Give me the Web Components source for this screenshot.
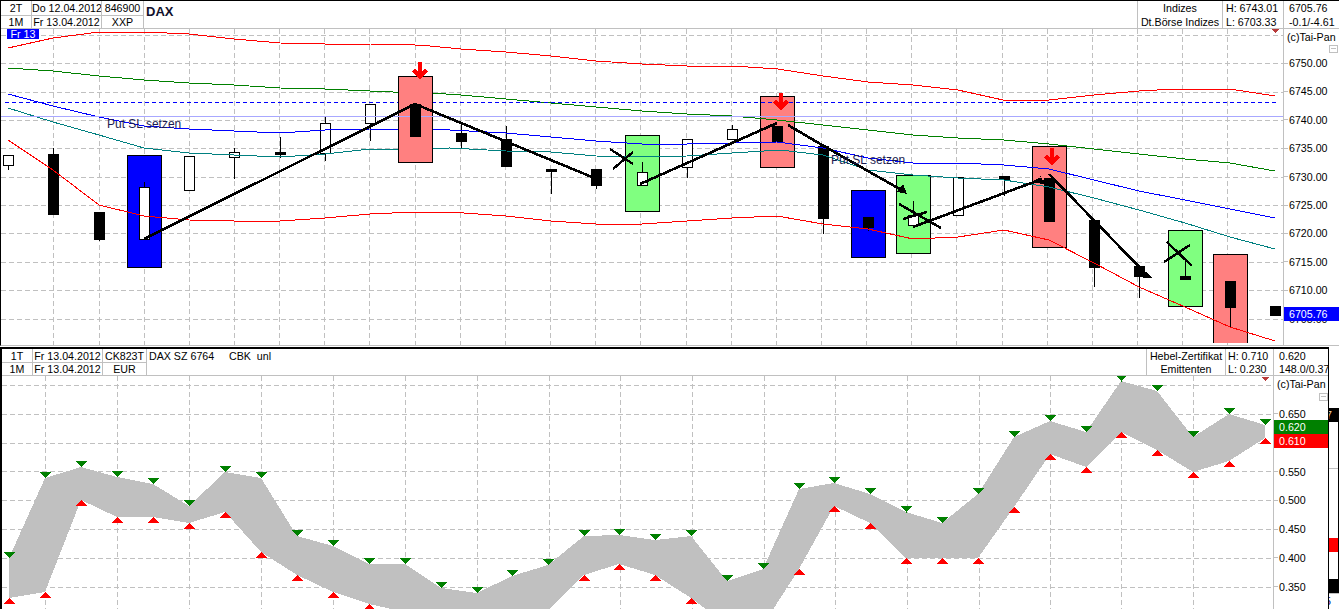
<!DOCTYPE html>
<html lang="de"><head><meta charset="utf-8"><title>Tai-Pan DAX</title>
<style>
html,body{margin:0;padding:0;background:#fff;overflow:hidden}
body{font:10.67px/12px "Liberation Sans",Arial,sans-serif;color:#000}
</style></head><body>
<tp-app>
  <tp-panel slot="top" variant="top">
    <tp-header slot="header" r1="14" r2="12">
      <tp-cell w="31" split><div>2T</div><div>1M</div></tp-cell>
      <tp-cell w="70" split><div>Do 12.04.2012</div><div>Fr 13.04.2012</div></tp-cell>
      <tp-cell w="42" split><div>846900</div><div>XXP</div></tp-cell>
      <tp-cell grow><tp-title>DAX</tp-title></tp-cell>
      <tp-cell w="85"><div>Indizes</div><div>Dt.Börse Indizes</div></tp-cell>
      <tp-cell w="61" left="3"><div>H: 6743.01</div><div>L: 6703.33</div></tp-cell>
      <tp-cell w="55" left="5" last><div>6705.76</div><div>-0.1/-4.61</div></tp-cell>
    </tp-header>
    <tp-price-chart slot="plot">
      <tp-tag style="left:6px;top:0;width:32px;height:10px;background:#0000ff;color:#fff;font-size:10.67px;line-height:11px;text-align:center">Fr 13</tp-tag>
      <tp-tag style="left:106px;top:88px;font-size:12px;line-height:14px;color:#1c1c50">Put SL setzen</tp-tag>
      <tp-tag style="left:830px;top:124px;font-size:12px;line-height:14px;color:#1c1c50">Put SL setzen</tp-tag>
    </tp-price-chart>
    <tp-axis slot="axis" first="19.8" row="28.42" copy-left="3">
      <span slot="copy">(c)Tai-Pan</span>
      <tp-tick>6750.00</tp-tick><tp-tick>6745.00</tp-tick><tp-tick>6740.00</tp-tick><tp-tick>6735.00</tp-tick><tp-tick>6730.00</tp-tick><tp-tick>6725.00</tp-tick><tp-tick>6720.00</tp-tick><tp-tick>6715.00</tp-tick><tp-tick>6710.00</tp-tick><tp-tick>6705.00</tp-tick>
      <tp-minus slot="over" style="left:45px;top:16px"></tp-minus>
      <tp-tag slot="over" style="left:0;top:278px;width:55px;height:14px;background:#0000ff;color:#fff;line-height:14px;padding-left:5px;box-sizing:border-box">6705.76</tp-tag>
    </tp-axis>
  </tp-panel>
  <tp-panel slot="bottom" variant="bottom">
    <tp-header slot="header" r1="13" r2="12">
      <tp-cell w="31" split><div>1T</div><div>1M</div></tp-cell>
      <tp-cell w="70" split><div>Fr 13.04.2012</div><div>Fr 13.04.2012</div></tp-cell>
      <tp-cell w="44" split><div>CK823T</div><div>EUR</div></tp-cell>
      <tp-cell grow left="2"><div style="white-space:pre">DAX SZ 6764     CBK  unl</div></tp-cell>
      <tp-cell w="79"><div>Hebel-Zertifikat</div><div>Emittenten</div></tp-cell>
      <tp-cell w="48" left="2"><div>H: 0.710</div><div>L: 0.230</div></tp-cell>
      <tp-cell w="54" left="5" last><div>0.620</div><div>148.0/0.37</div></tp-cell>
    </tp-header>
    <tp-warrant-chart slot="plot"></tp-warrant-chart>
    <tp-axis slot="axis" first="23.6" row="28.8" copy-left="3">
      <span slot="copy">(c)Tai-Pan</span>
      <tp-tick>0.650</tp-tick><tp-tick blank></tp-tick><tp-tick>0.550</tp-tick><tp-tick>0.500</tp-tick><tp-tick>0.450</tp-tick><tp-tick>0.400</tp-tick><tp-tick>0.350</tp-tick>
      <tp-minus slot="over" style="left:45px;top:17px"></tp-minus>
      <tp-tag slot="over" style="left:0;top:44px;width:54px;height:14px;background:#008000;color:#fff;line-height:14px;padding-left:5px;box-sizing:border-box">0.620</tp-tag>
      <tp-tag slot="over" style="left:0;top:58px;width:54px;height:14px;background:#ff0000;color:#fff;line-height:14px;padding-left:5px;box-sizing:border-box">0.610</tp-tag>
    </tp-axis>
  </tp-panel>
  <tp-strip slot="strip"></tp-strip>
</tp-app>
<script>
const def=(name,cls)=>customElements.define(name,cls);
class Base extends HTMLElement{
  constructor(){super();this.attachShadow({mode:'open'});}
}
def('tp-app',class extends Base{connectedCallback(){this.shadowRoot.innerHTML=`<style>
:host{display:grid;width:1339px;height:609px;grid-template-columns:1329px 10px;grid-template-rows:346px 1px 262px;overflow:hidden;background:#fff}
.top{grid-column:1/3;grid-row:1}.gap{grid-column:1/3;grid-row:2}.bot{grid-column:1;grid-row:3;min-width:0}.str{grid-column:2;grid-row:3;min-width:0}
</style><div class="top"><slot name="top"></slot></div><div class="gap"></div><div class="bot"><slot name="bottom"></slot></div><div class="str"><slot name="strip"></slot></div>`;}});
def('tp-panel',class extends Base{connectedCallback(){const top=this.getAttribute('variant')==='top';this.shadowRoot.innerHTML=`<style>
:host{display:flex;flex-direction:column;height:100%;box-sizing:border-box;background:#fff;overflow:hidden;
${top?'border-top:1px solid #000;border-left:1px solid #000;border-bottom:1px solid #c0c0c0;':'border-top:2px solid #000;border-left:2px solid #000;border-right:1px solid #000;'}}
.body{flex:1;display:flex;min-height:0}
</style><slot name="header"></slot><div class="body"><slot name="plot"></slot><slot name="axis"></slot></div>`;}});
def('tp-header',class extends Base{connectedCallback(){const a=+this.getAttribute('r1'),b=+this.getAttribute('r2');this.shadowRoot.innerHTML=`<style>
:host{display:flex;flex:none;height:${a+b+2}px;box-sizing:border-box;border-bottom:1px solid #c0c0c0;--r1:${a}px;--r2:${b}px}
</style><slot></slot>`;}});
def('tp-cell',class extends Base{connectedCallback(){
  const w=this.getAttribute('w'),g=this.hasAttribute('grow'),s=this.hasAttribute('split'),l=this.getAttribute('left'),last=this.hasAttribute('last');
  this.shadowRoot.innerHTML=`<style>
:host{display:grid;grid-template-rows:calc(var(--r1) + 1px) var(--r2);box-sizing:border-box;overflow:hidden;white-space:nowrap;
${g?'flex:1;min-width:0;':`flex:none;width:${w}px;`}${last?'':'border-right:1px solid #c0c0c0;'}}
::slotted(div){text-align:${l?'left':'center'};padding-left:${l||0}px;line-height:12px;align-self:stretch;display:block;overflow:hidden}
::slotted(div:first-child){padding-top:1px;${s?'border-bottom:1px solid #c0c0c0;':''}}
</style><slot></slot>`;}});
def('tp-title',class extends Base{connectedCallback(){this.shadowRoot.innerHTML=`<style>
:host{display:block;font:bold 13px/22px "Liberation Sans",Arial,sans-serif;color:#10102c;padding-left:2px}
</style><slot></slot>`;}});
def('tp-tag',class extends Base{connectedCallback(){this.shadowRoot.innerHTML=`<style>
:host{position:absolute;display:block;white-space:nowrap}
</style><slot></slot>`;}});
def('tp-tick',class extends Base{connectedCallback(){const blank=this.hasAttribute('blank');this.shadowRoot.innerHTML=`<style>
:host{display:flex;align-items:center;gap:1px;flex:none;height:var(--row);white-space:nowrap}
i{width:4px;border-top:1px solid #c0c0c0;flex:none}
</style><i></i><slot></slot>`;if(blank)this.shadowRoot.querySelector('i').style.visibility='hidden';}});
def('tp-minus',class extends Base{connectedCallback(){this.shadowRoot.innerHTML=`<style>
:host{position:absolute;display:block;width:9px;height:8px;box-sizing:border-box;border:1px solid #c0c0c0;background:#fff}
i{display:block;margin:2px 1px 0;border-top:1px solid #c0c0c0}
</style><i></i>`;}});
def('tp-axis',class extends Base{connectedCallback(){const f=this.getAttribute('first'),r=this.getAttribute('row'),c=this.getAttribute('copy-left');this.shadowRoot.innerHTML=`<style>
:host{position:relative;display:flex;flex-direction:column;flex:1;min-width:0;box-sizing:border-box;border-left:1px solid #c0c0c0;--row:${r}px;overflow:hidden;background:#fff}
.copy{height:${f}px;flex:none;font-size:10.67px;line-height:17px;padding-left:${c}px;white-space:nowrap;box-sizing:border-box}
</style><div class="copy"><slot name="copy"></slot></div><slot></slot><slot name="over"></slot>`;}});
/* chart helpers */
const pl=(pts,col,w=1,extra='')=>`<polyline points="${pts.map(p=>p.join(',')).join(' ')}" fill="none" stroke="${col}" stroke-width="${w}" ${extra}/>`;
const ln=(a,b,c,d,col,w=1,extra='')=>`<line x1="${a}" y1="${b}" x2="${c}" y2="${d}" stroke="${col}" stroke-width="${w}" ${extra}/>`;
const grid=(xs,ys,x0,x1,y0,y1)=>xs.map(x=>ln(x+.5,y0,x+.5,y1,'#c0c0c0',1,'stroke-dasharray="5 3"')).join('')+ys.map(y=>ln(x0,y+.5,x1,y+.5,'#c0c0c0',1,'stroke-dasharray="5 3"')).join('');
def('tp-price-chart',class extends Base{connectedCallback(){
  const xs=[];for(let i=0;i<27;i++)xs.push(Math.round(53.4+45.15*i));
  const ys=[35,63,92,120,148,177,205,233,262,290,319];
  const box=(x,y,w,h,c)=>`<rect x="${x+.5}" y="${y+.5}" width="${w}" height="${h}" fill="${c}" stroke="#000"/>`;
  const pink='#ff8080',lime='#80ff80',blue='#0000ff';
  const boxes=[[127,155,34,112,blue],[625,135,34,76,lime],[760,96,34,71,pink],[851,190,34,67,blue],[896,175,34,78,lime],[1032,146,34,101,pink],[1168,230,34,76,lime]];
  const openBox=`<rect x="1213.5" y="254.5" width="34" height="88" fill="${pink}"/>`+pl([[1213.5,343],[1213.5,254.5],[1247.5,254.5],[1247.5,343]],'#000');
  const firstBox=[398,76,34,86,pink];
  /* candle: x,top,bottom,wickTop,wickBottom,white */
  const C=[[8,155,165,155,169,1],[53,154,214,148,214,0],[99,212,239,212,240,0],[144,187,239,182,239,1],[189,156,190,156,190,1],[234,152,157,148,178,1],[280,152,154,137,157,0],[325,123,153,117,160,1],[370,104,123,104,140,1],[461,133,141,124,148,0],[506,139,166,126,166,0],[551,169,171,169,193,0],[596,169,185,169,188,0],[642,172,185,162,185,1],[687,139,167,139,177,1],[732,129,139,125,139,1],[777,126,141,126,141,0],[823,146,218,146,233,0],[868,217,227,217,230,0],[913,215,225,201,225,1],[958,177,215,177,215,1],[1004,176,179,176,195,0],[1049,178,221,178,221,0],[1094,220,267,220,286,0],[1139,266,276,266,297,0],[1185,276,279,260,279,0],[1230,281,307,281,327,0],[1275,306,315,306,315,0]];
  const candle=([x,t,b,wt,wb,w])=>{const cx=x+.5;
    return ln(cx,wt,cx,wb+1,'#000')+(w?`<rect x="${x-5+.5}" y="${t+.5}" width="10" height="${b-t}" fill="#fff" stroke="#000"/>`:`<rect x="${x-5}" y="${t}" width="11" height="${b-t+1}" fill="#000"/>`);};
  const up=[[8,48],[53,38],[99,32],[144,32],[189,34],[234,39],[280,43],[325,44],[370,44],[415,45],[430,46],[461,49],[506,52],[551,56],[596,61],[642,64],[687,66],[733,66],[778,69],[823,76],[868,82],[913,85],[958,90],[1003,100],[1049,100],[1094,95],[1139,91],[1175,89],[1230,89],[1275,96]];
  const gr=[[8,68],[53,71],[99,76],[144,80],[189,83],[234,85],[280,88],[325,89],[370,91],[415,93],[430,93],[461,95],[506,99],[551,103],[596,107],[642,111],[687,114],[732,116],[777,120],[823,125],[868,130],[913,135],[958,138],[1004,140],[1049,144],[1094,149],[1139,154],[1185,159],[1230,163],[1275,171]];
  const bl=[[8,94],[53,106],[99,117],[144,126],[189,129],[234,131],[280,133],[325,130],[370,129],[415,129],[450,130],[506,133],[551,137],[596,141],[642,144],[687,144],[732,143],[777,142],[823,148],[868,158],[913,163],[958,163],[1004,165],[1049,169],[1094,180],[1139,191],[1185,200],[1230,209],[1275,218]];
  const te=[[8,108],[53,122],[99,135],[144,148],[189,153],[234,155],[280,157],[325,154],[370,149],[415,149],[450,148],[506,151],[551,152],[596,156],[642,157],[687,156],[732,153],[780,150],[823,155],[868,170],[913,175],[958,178],[1004,180],[1049,187],[1094,198],[1139,210],[1185,223],[1230,237],[1275,249]];
  const lo=[[8,140],[53,170],[99,205],[144,216],[189,220],[234,221],[280,221],[325,218],[370,214],[415,212],[450,212],[506,216],[551,221],[596,224],[642,224],[687,221],[732,218],[777,216],[823,224],[868,229],[913,239],[958,237],[1004,230],[1049,240],[1094,263],[1139,287],[1185,307],[1230,327],[1275,341]];
  const arrow=(x,y)=>pl([[x-6.5,y+8],[x,y+14.5],[x+6.5,y+8]],'#ff0000',3.6)+ln(x,y,x,y+14,'#ff0000',3.6);
  const X=(a,b,c,d,e,f,g,h)=>ln(a,b,c,d,'#000',2.4)+ln(e,f,g,h,'#000',2.4);
  this.shadowRoot.innerHTML=`<style>
:host{position:relative;display:block;width:1282px;height:316px;flex:none;overflow:hidden}
svg{display:block;position:absolute;left:0;top:0}
</style><svg width="1282" height="316" viewBox="1 29 1282 316" shape-rendering="crispEdges">
${grid(xs,ys,1,1283,29,345)}
${boxes.map(b=>box(...b)).join('')}${openBox}
${C.filter(c=>c[0]!==415).map(candle).join('')}
${pl(up,'#ff0000')}${pl(gr,'#008000')}${pl(bl,'#0000ff')}${pl(te,'#008080')}${pl(lo,'#ff0000')}
${ln(5,102.5,1277,102.5,'#0000ff',1,'stroke-dasharray="4 3"')}
${box(...firstBox)}
${ln(1,116.5,1283,116.5,'#a8a8ff')}
${candle([415,104,136,104,136,0])}
${pl([[144,239],[415,104],[592,177]],'#000',2.6)}
${pl([[640,184],[777,123]],'#000',2.6)}
${ln(788,125,822,145,'#000',2.6)}${ln(822,145,905,192,'#000',2.6)}
<polygon points="907,194 897,192 903,184" fill="#000"/>
${ln(913,227,1042,179,'#000',2.6)}
<polygon points="1042,176 1030,183 1050,184 1038,177" fill="#000"/>
${ln(1049,174,1147,275,'#000',2.6)}
<polygon points="1152,278 1143,278 1146,271" fill="#000"/>
${X(610,149,633,164,613,169,633,152)}
${X(899,204,941,228,903,219,927,212)}
${X(1167,242,1192,266,1164,262,1190,245)}
${arrow(420,62)}${arrow(781,93)}${arrow(1052,148)}
<polygon points="1272,29 1279,29 1275.5,33" fill="#b83a3a"/>
</svg><slot></slot>`;
}});
def('tp-warrant-chart',class extends Base{connectedCallback(){
  const xs=[45,117,189,261,333,405,477,549,620,692,764,835,907,979,1050,1121,1193];
  const ys=[385,414,443,471,500,529,558,587];
  const G=[[9,558],[45,478],[81,467],[117,477],[153,484],[189,506],[225,472],[261,478],[297,536],[333,546],[369,564],[405,564],[441,588],[477,593],[512,576],[548,565],[584,536],[619,535],[655,540],[691,536],[727,581],[763,569],[799,489],[834,483],[870,494],[906,512],[942,523],[978,494],[1014,437],[1050,421],[1086,432],[1121,381],[1157,391],[1193,437],[1229,414],[1265,425]];
  const R=[[9,598],[45,592],[81,500],[117,517],[153,517],[189,523],[225,512],[261,552],[297,575],[333,592],[369,604],[405,612],[441,620],[477,620],[512,620],[548,610],[584,575],[619,564],[655,575],[691,598],[727,625],[763,625],[799,569],[834,506],[870,523],[906,558],[942,558],[978,558],[1014,507],[1050,454],[1086,467],[1121,432],[1157,450],[1193,472],[1229,461],[1265,438]];
  const poly=G.concat(R.slice().reverse());
  const dn=([x,y])=>`<polygon points="${x-5},${y-6} ${x+6},${y-6} ${x+.5},${y+.5}" fill="#008000"/>`;
  const upT=([x,y])=>`<polygon points="${x+.5},${y-.5} ${x+6},${y+6} ${x-5},${y+6}" fill="#ff0000"/>`;
  this.shadowRoot.innerHTML=`<style>
:host{position:relative;display:block;width:1271px;height:233px;flex:none;overflow:hidden}
svg{display:block}
</style><svg width="1271" height="233" viewBox="2 376 1271 233" shape-rendering="crispEdges">
${grid(xs,ys,2,1273,376,609)}
<polygon points="${poly.map(p=>p.join(',')).join(' ')}" fill="#c0c0c0"/>
${G.map(dn).join('')}${R.map(upT).join('')}
<polygon points="1262,377 1269,377 1265.5,381" fill="#b83a3a"/>
</svg>`;
}});
def('tp-strip',class extends Base{connectedCallback(){this.shadowRoot.innerHTML=`<style>
:host{display:flex;flex-direction:column;height:262px;width:10px;overflow:hidden;background:#fff}
div{box-sizing:border-box;flex:none}
.sp0{height:61px}
.body{display:flex;flex-direction:column;height:185px;border-right:1px solid #000}
.blk{height:14px;background:#000;color:#ffd8a0;overflow:hidden;line-height:14px;white-space:nowrap}
.blk span{margin-left:-3px;font-size:10.67px}
.wh1{height:47px;border-bottom:1px solid #c0c0c0}
.wh2{height:69px}
.red{height:14px;background:#ff0000}
.wh3{height:27px}
.blk2{height:14px;background:#000}
.tail{height:15px;border-top:1px solid #c0c0c0;overflow:hidden;white-space:nowrap;line-height:14px;color:#00008a}
.tail span{margin-left:-4px;display:inline-block}
</style><div class="sp0"></div><div class="body"><div class="blk"><span>7</span></div><div class="wh1"></div><div class="wh2"></div><div class="red"></div><div class="wh3"></div><div class="blk2"></div></div><div class="tail"><span>5</span></div>`;}});
</script>
</body></html>
